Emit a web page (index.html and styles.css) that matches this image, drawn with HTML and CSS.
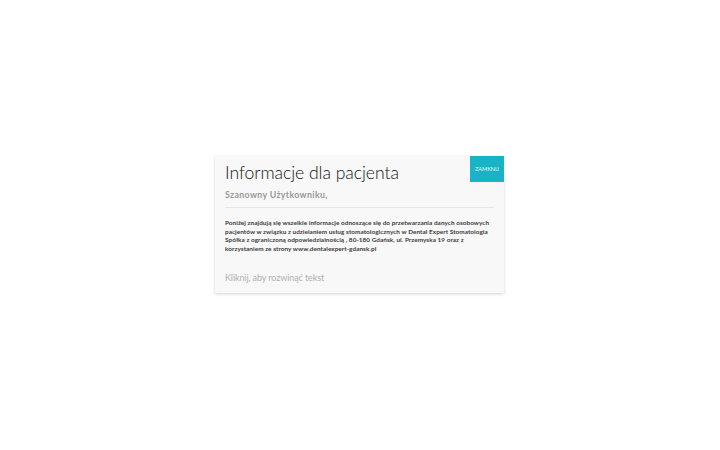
FILE: index.html
```html
<!DOCTYPE html>
<html lang="pl">
<head>
<meta charset="utf-8">
<link rel="stylesheet" href="styles.css">
</head>
<body>
<div class="page">
  <div class="modal">
    <div class="head">
      <h1 class="title">Informacje dla pacjenta</h1>
      <button class="close">ZAMKNIJ</button>
    </div>
    <p class="greet">Szanowny Użytkowniku,</p>
    <hr class="rule">
    <p class="text">Poniżej znajdują się wszelkie informacje odnoszące się do przetwarzania danych osobowych pacjentów w związku z udzielaniem usług stomatologicznych w Dental Expert Stomatologia Spółka z ograniczoną odpowiedzialnością , 80-180 Gdańsk, ul. Przemyska 19 oraz z<br>korzystaniem ze strony www.dentalexpert-gdansk.pl</p>
    <p class="more">Kliknij, aby rozwinąć tekst</p>
  </div>
</div>
</body>
</html>
```
FILE: styles.css
```css
html, body {
  margin: 0;
  padding: 0;
  background: #ffffff;
  font-family: "Lato", "Noto Sans", sans-serif;
}
.page {
  width: 720px;
  height: 450px;
  display: flex;
  align-items: center;
  justify-content: center;
}
.modal {
  width: 289px;
  height: 137px;
  box-sizing: border-box;
  background: #f8f8f8;
  box-shadow: 0 1px 3px rgba(0,0,0,0.18);
  padding: 0 10px 0 10px;
  margin: -1px 0 0 -1px;
}
.head {
  display: flex;
  justify-content: space-between;
  align-items: flex-start;
  margin-right: -10px;
}
.title {
  margin: 6px 0 0 0;
  font-size: 17.6px;
  font-weight: 300;
  color: #111;
  line-height: 22px;
  letter-spacing: -0.05px;
}
.close {
  width: 34px;
  height: 26px;
  border: none;
  padding: 0;
  background: #19b2c6;
  color: #e8fbff;
  font-family: "Lato", sans-serif;
  font-size: 5.5px;
  letter-spacing: 0;
}
.greet {
  margin: 5px 0 0 0;
  font-size: 8.8px;
  font-weight: 700;
  color: #999;
  line-height: 12px;
  letter-spacing: 0.35px;
}
.rule {
  border: none;
  border-top: 1px solid #e6e6e6;
  margin: 6px 0 0 0;
}
.text {
  margin: 11px 0 0 0;
  font-size: 6.4px;
  font-weight: 700;
  color: #3a3a3a;
  line-height: 8.5px;
  letter-spacing: 0.05px;
}
.more {
  margin: 19px 0 0 0;
  font-size: 9px;
  font-weight: 400;
  color: #b0b0b0;
  line-height: 12px;
  letter-spacing: -0.1px;
}
```
